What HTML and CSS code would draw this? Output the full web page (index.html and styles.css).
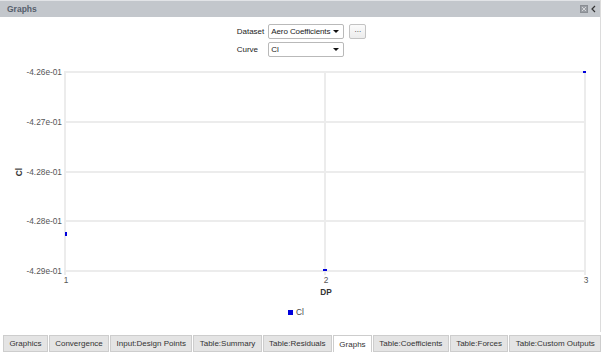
FILE: index.html
```html
<!DOCTYPE html>
<html lang="en">
<head>
  <meta charset="UTF-8" />
  <title>Graphs</title>
  <link rel="stylesheet" href="styles.css">
</head>
<body>
  <div class="panel">
    <div class="titlebar">
      <span class="title">Graphs</span>
      <span class="tb-icons">
        <svg width="8" height="8" viewBox="0 0 8 8">
          <rect x="0.5" y="0.5" width="7" height="7" fill="#9a9ea4" stroke="#8a8e94" />
          <path d="M2 2 L6 6 M6 2 L2 6" stroke="#d4d6d9" stroke-width="1" />
        </svg>
        <svg width="5" height="8" viewBox="0 0 5 8">
          <path d="M4 1 L1 4 L4 7" fill="none" stroke="#333" stroke-width="1.2" />
        </svg>
      </span>
    </div>

    <div class="controls">
      <span class="lbl">Dataset</span>
      <div class="select">Aero Coefficients<span class="caret"></span></div>
      <button class="more">...</button>
      <span class="lbl">Curve</span>
      <div class="select">Cl<span class="caret"></span></div>
    </div>

    <svg class="chart" width="600" height="272" viewBox="0 0 600 272">
      <g class="grid">
        <line x1="64" y1="12" x2="586" y2="12" />
        <line x1="64" y1="62" x2="586" y2="62" />
        <line x1="64" y1="112" x2="586" y2="112" />
        <line x1="64" y1="161" x2="586" y2="161" />
        <line x1="64" y1="211" x2="586" y2="211" />
        <line x1="65" y1="12" x2="65" y2="215" />
        <line x1="325" y1="12" x2="325" y2="215" />
        <line x1="585" y1="12" x2="585" y2="215" />
      </g>
      <g class="ticks-y">
        <text x="62" y="15">-4.26e-01</text>
        <text x="62" y="65">-4.27e-01</text>
        <text x="62" y="115">-4.28e-01</text>
        <text x="62" y="164">-4.28e-01</text>
        <text x="62" y="214">-4.29e-01</text>
      </g>
      <g class="ticks-x">
        <text x="66" y="223">1</text>
        <text x="326" y="223">2</text>
        <text x="586" y="223">3</text>
      </g>
      <text class="axis-title" x="326" y="235">DP</text>
      <text class="axis-title y-title" transform="translate(22 112) rotate(-90)">Cl</text>
      <g class="points">
        <rect x="65" y="172" width="2" height="4" />
        <rect x="323" y="209" width="4" height="2" />
        <rect x="583" y="11" width="3" height="2" />
      </g>
      <rect class="legend-key" x="288" y="250" width="5" height="5" />
      <text class="legend" x="296" y="255">Cl</text>
    </svg>
  </div>

  <div class="tabs">
    <div class="tab">Graphics</div>
    <div class="tab">Convergence</div>
    <div class="tab">Input:Design Points</div>
    <div class="tab">Table:Summary</div>
    <div class="tab">Table:Residuals</div>
    <div class="tab active">Graphs</div>
    <div class="tab">Table:Coefficients</div>
    <div class="tab">Table:Forces</div>
    <div class="tab">Table:Custom Outputs</div>
  </div>
</body>
</html>
```

FILE: styles.css
```css
body {
  margin: 0;
  width: 601px;
  height: 352px;
  overflow: hidden;
  background: #ffffff;
  font-family: "Liberation Sans", Arial, sans-serif;
  font-size: 8px;
  color: #222;
}

.panel {
  border-right: 1px solid #dcdcdc;
}

.titlebar {
  height: 16px;
  border-top: 1px solid #e2e4e7;
  background: #c3c7cc;
  display: flex;
  align-items: center;
  justify-content: space-between;
  padding: 0 4px 0 7px;
}

.title {
  font-weight: bold;
  font-size: 8.5px;
  color: #56606c;
}

.tb-icons {
  display: flex;
  align-items: center;
  gap: 3px;
}

.tb-icons svg {
  display: block;
}

.controls {
  display: grid;
  grid-template-columns: auto 76px 16px;
  justify-content: center;
  align-items: center;
  column-gap: 3px;
  row-gap: 3px;
  padding: 7px 0 3px;
}

.lbl {
  padding-right: 1px;
  color: #222;
}

.select {
  position: relative;
  height: 13px;
  line-height: 13px;
  border: 1px solid #b9b9b9;
  border-radius: 2px;
  padding: 0 2px;
  background: #fff;
  white-space: nowrap;
  letter-spacing: -0.1px;
}

.caret {
  position: absolute;
  right: 4px;
  top: 5px;
  width: 0;
  height: 0;
  border-left: 3px solid transparent;
  border-right: 3px solid transparent;
  border-top: 3px solid #111;
}

.more {
  margin-left: 2px;
  width: 17px;
  height: 15px;
  padding: 0 0 3px;
  border: 1px solid #c3c3c3;
  border-radius: 2px;
  background: linear-gradient(#fbfbfb, #ececec);
  font-family: inherit;
  font-size: 8px;
  color: #333;
  line-height: 8px;
}

.chart {
  display: block;
  font-family: "Liberation Sans", Arial, sans-serif;
}

.grid line {
  stroke: #ececec;
  stroke-width: 2;
}

.ticks-y text {
  font-size: 8.3px;
  fill: #555;
  text-anchor: end;
}

.ticks-x text {
  font-size: 8.3px;
  fill: #555;
  text-anchor: middle;
}

.axis-title {
  font-size: 8.3px;
  font-weight: bold;
  fill: #333;
  text-anchor: middle;
}

.points rect,
.legend-key {
  fill: #0000dc;
}

.legend {
  font-size: 8.3px;
  fill: #444;
}

.tabs {
  display: flex;
  gap: 1px;
  padding: 3px 0 0 3px;
  align-items: flex-start;
}

.tab {
  height: 15px;
  line-height: 16px;
  padding: 0 5.4px;
  background: #e4e4e4;
  border: 1px solid #cdcdcd;
  color: #333;
  white-space: nowrap;
}

.tab.active {
  height: 16px;
  line-height: 18px;
  background: #fff;
  border-color: #cdcdcd;
}
```
